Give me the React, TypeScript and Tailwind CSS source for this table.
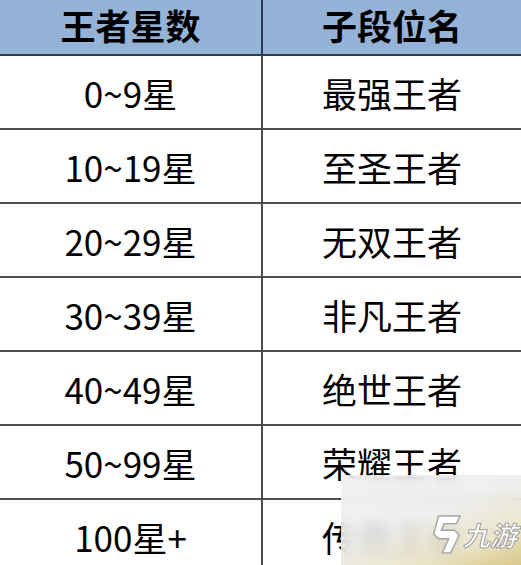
import React from "react";

const rows = [
  { stars: "0~9星", name: "最强王者" },
  { stars: "10~19星", name: "至圣王者" },
  { stars: "20~29星", name: "无双王者" },
  { stars: "30~39星", name: "非凡王者" },
  { stars: "40~49星", name: "绝世王者" },
  { stars: "50~99星", name: "荣耀王者" },
  { stars: "100星+", name: "传奇王者" },
];

function Watermark() {
  return (
    <div className="absolute left-[341px] top-[475px] w-[180px] h-[90px] backdrop-blur-[6px] bg-[linear-gradient(160deg,rgba(240,240,240,0.85)_0%,rgba(236,236,236,0.85)_45%,rgba(232,226,196,0.9)_75%,rgba(214,196,130,0.95)_100%)]">
      <div className="absolute left-[88px] top-[38px] flex items-center whitespace-nowrap">
        <svg width="34" height="42" viewBox="0 0 36 44">
          <path
            d="M10 3 L33 3 L29 11 L16 11 L13 18 L27 18 L32 23 L23 42 L14 42 L21 27 L10 27 L5 22 Z"
            fill="#ffffff"
            stroke="#a3a3a3"
            strokeWidth="1.5"
            strokeLinejoin="round"
          />
        </svg>
        <span className="text-[27px] leading-none font-bold italic text-white [-webkit-text-stroke:1px_#9e9e9e] font-['Noto_Sans_CJK_SC',sans-serif]">
          九游
        </span>
      </div>
    </div>
  );
}

export default function App() {
  return (
    <div className="relative w-[521px] h-[565px] overflow-hidden bg-white font-['Noto_Sans_CJK_SC','Microsoft_YaHei',sans-serif] text-black">
      <div className="grid grid-cols-[263px_1fr]">
        {/* header */}
        <div className="h-[56px] bg-[#95b3d7] border-b-2 border-r-2 border-[#2a3a55] flex items-center justify-center text-[35px] font-bold leading-none pb-[6px]">
          王者星数
        </div>
        <div className="h-[56px] bg-[#95b3d7] border-b-2 border-[#2a3a55] flex items-center justify-center text-[35px] font-bold leading-none pb-[6px]">
          子段位名
        </div>

        {rows.map((r) => (
          <React.Fragment key={r.stars}>
            <div className="h-[74px] border-b-2 border-r-2 border-[#4f4f4f] flex items-center justify-center text-[35px] leading-none">
              {r.stars}
            </div>
            <div className="h-[74px] border-b-2 border-[#4f4f4f] flex items-center justify-center text-[35px] leading-none">
              {r.name}
            </div>
          </React.Fragment>
        ))}
      </div>
      <Watermark />
    </div>
  );
}
